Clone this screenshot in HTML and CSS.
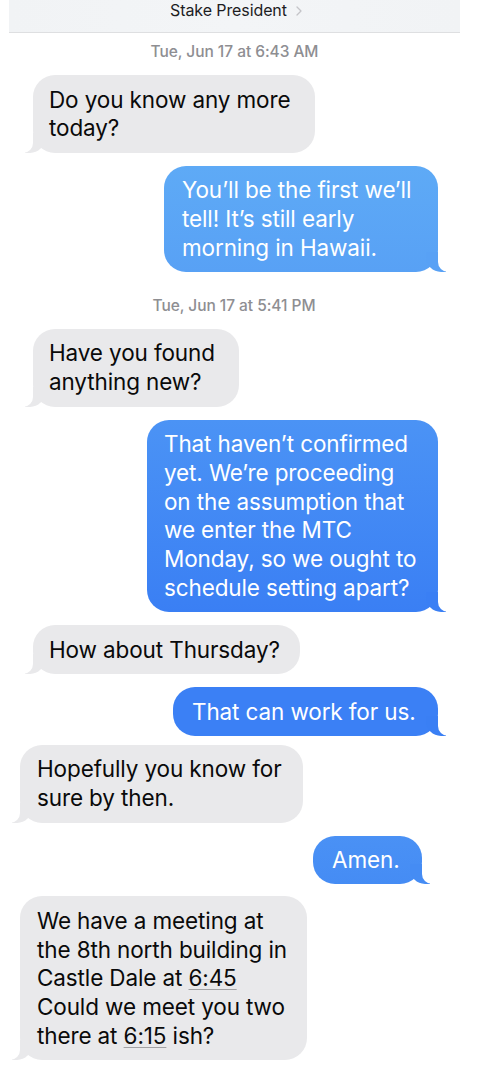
FILE: index.html
```html
<!DOCTYPE html>
<html lang="en">
<head>
<meta charset="utf-8">
<title>Stake President</title>
<link rel="stylesheet" href="styles.css">
</head>
<body>
<div class="screen">
  <header class="nav">
    <span class="title">Stake President</span>
    <span class="chev">
      <svg width="6" height="10" viewBox="0 0 6 10"><path d="M1 1 L5 5 L1 9" fill="none" stroke="#c4c4c8" stroke-width="1.3" stroke-linecap="round" stroke-linejoin="round"/></svg>
    </span>
  </header>
  <main class="thread">
    <div class="stamp stamp-first">Tue, Jun 17 at 6:43 AM</div>
    <div class="msg recv b1 first">Do you know any more<br>today?</div>
    <div class="msg sent b2">You’ll be the first we’ll<br>tell! It’s still early<br>morning in Hawaii.</div>

    <div class="stamp stamp-second">Tue, Jun 17 at 5:41 PM</div>
    <div class="msg recv b3 first">Have you found<br>anything new?</div>
    <div class="msg sent b4">That haven’t confirmed<br>yet. We’re proceeding<br>on the assumption that<br>we enter the MTC<br>Monday, so we ought to<br>schedule setting apart?</div>
    <div class="msg recv b5">How about Thursday?</div>
    <div class="msg sent b6">That can work for us.</div>
    <div class="msg recv b7 shift tight">Hopefully you know for<br>sure by then.</div>
    <div class="msg sent b8">Amen.</div>
    <div class="msg recv b9 shift">We have a meeting at<br>the 8th north building in<br>Castle Dale at <span class="link">6:45</span><br>Could we meet you two<br>there at <span class="link">6:15</span> ish?</div>
  </main>
</div>
</body>
</html>
```
FILE: styles.css
```css
* { box-sizing: border-box; }

html, body {
  margin: 0;
  padding: 0;
  background: #ffffff;
}

body {
  width: 492px;
  height: 1066px;
  overflow: hidden;
  font-family: Inter, "Noto Sans", "Liberation Sans", sans-serif;
  -webkit-font-smoothing: antialiased;
}

.screen {
  display: flex;
  flex-direction: column;
}

.nav {
  margin-left: 9px;
  width: 451px;
  height: 33px;
  padding-bottom: 12px;
  padding-left: 3px;
  background: linear-gradient(90deg, #f1f3f5 0%, #f3f5f7 50%, #f1f3f5 100%);
  border-bottom: 1px solid #dedfe1;
  display: flex;
  align-items: center;
  justify-content: center;
  gap: 9px;
}

.title {
  font-size: 16px;
  color: #1d1d1f;
  letter-spacing: -0.1px;
  line-height: 18px;
}

.chev {
  display: flex;
  align-items: center;
  margin-top: 1px;
}

.thread {
  display: flex;
  flex-direction: column;
}

.stamp {
  align-self: center;
  font-size: 15.5px;
  line-height: 18px;
  font-weight: 500;
  color: #8e8e92;
  letter-spacing: -0.05px;
}

.stamp-first { margin-top: 10px; margin-left: -23px; }
.stamp-second { margin-top: 25px; margin-left: -24px; }

.msg {
  position: relative;
  margin-top: 13px;
  padding: 10.5px 0 9.5px;
  font-size: 22.5px;
  line-height: 28.8px;
  letter-spacing: -0.12px;
  white-space: nowrap;
  border-radius: 22px;
}

.msg.first { margin-top: 14px; }
.msg.tight { margin-top: 9px; }

.recv {
  align-self: flex-start;
  margin-left: 33px;
  padding-left: 16px;
  background: #e9e9eb;
  color: #0a0a0a;
}

.recv.shift { margin-left: 20px; padding-left: 17px; }

.sent {
  align-self: flex-end;
  margin-right: 54px;
  padding-left: 18px;
  color: #ffffff;
  --tail: #3d82f4;
  background: var(--tail);
}

/* Tails */
.msg::before,
.msg::after {
  content: "";
  position: absolute;
  bottom: 0;
  height: 20px;
}

.recv::before {
  left: -8px;
  width: 20px;
  background: #e9e9eb;
  border-bottom-right-radius: 15px;
}
.recv::after {
  left: -10px;
  width: 10px;
  background: #ffffff;
  border-bottom-right-radius: 10px;
}

.sent::before {
  right: -8px;
  width: 20px;
  background: var(--tail);
  border-bottom-left-radius: 15px;
}
.sent::after {
  right: -10px;
  width: 10px;
  background: #ffffff;
  border-bottom-left-radius: 10px;
}

/* Per-bubble sizes and shades */
.b1 { width: 282px; }
.b2 { width: 274px; --tail: #58a1f5; background: linear-gradient(180deg, #5eaaf6 0%, #58a1f5 100%); }
.b3 { width: 206px; }
.b4 { width: 291px; padding-left: 17px; --tail: #3a7ff4; background: linear-gradient(180deg, #4b93f5 0%, #3a7ff4 100%); }
.b5 { width: 267px; }
.b6 { width: 265px; padding-left: 19px; --tail: #3a7ff4; background: #3b80f5; }
.b7 { width: 283px; }
.b8 { width: 109px; margin-right: 70px; padding-left: 19px; --tail: #458cf4; background: linear-gradient(180deg, #4a91f5 0%, #458cf4 100%); }
.b9 { width: 287px; margin-top: 12px; }

.link {
  text-decoration: underline;
  text-decoration-color: rgba(0, 0, 0, 0.3);
  text-decoration-thickness: 1px;
  text-underline-offset: 3px;
}
```
